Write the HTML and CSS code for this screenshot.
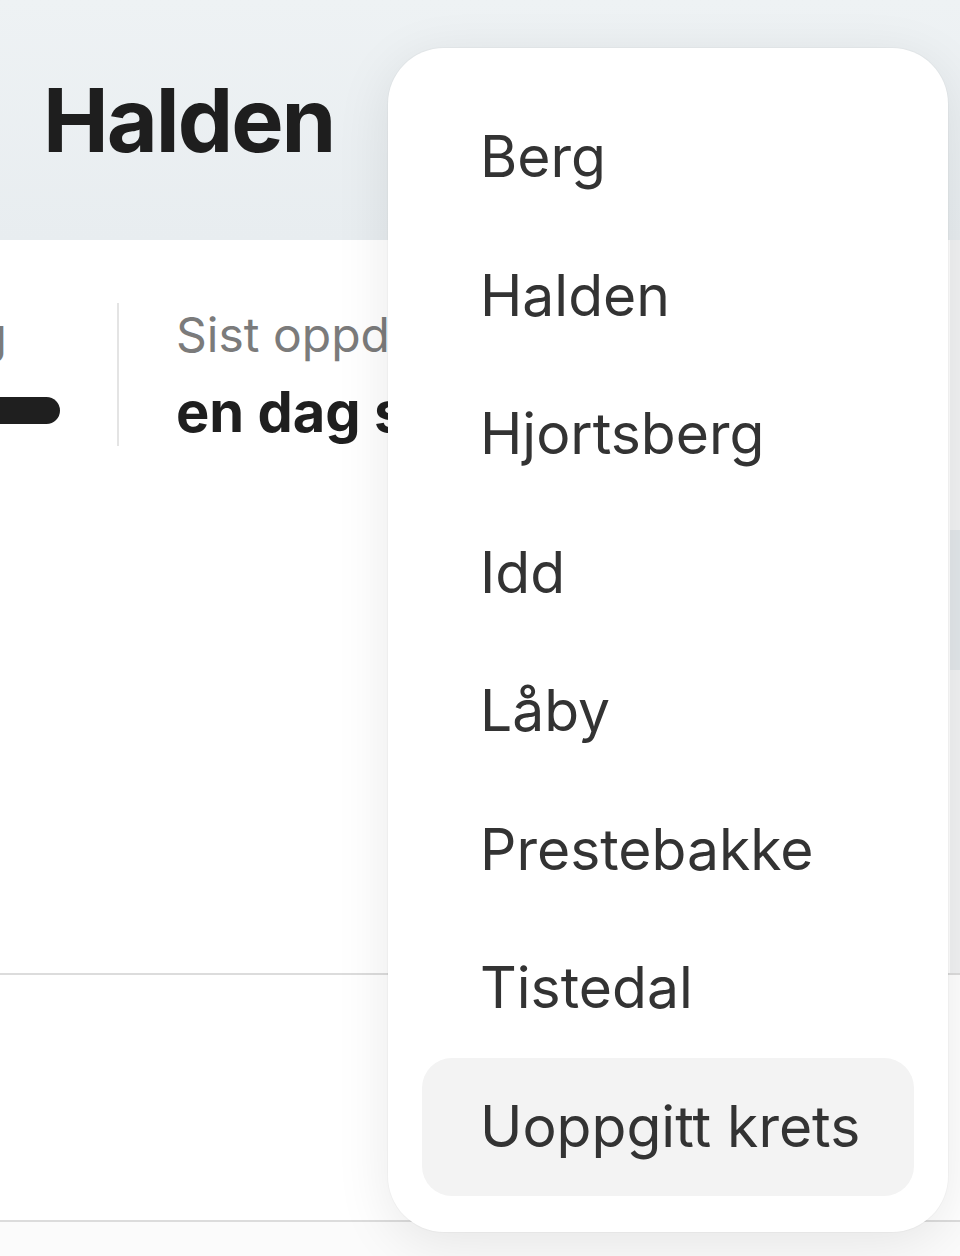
FILE: index.html
```html
<!DOCTYPE html>
<html lang="no">
<head>
<meta charset="utf-8">
<title>Halden</title>
<link rel="stylesheet" href="styles.css">
</head>
<body>
  <header class="hero">
    <h1 class="hero-title">Halden</h1>
  </header>

  <div class="content">
    <main class="main">
      <div class="stats">
        <div class="stat stat-first">
          <span class="stat-label">Telling</span>
          <div class="stat-bar"></div>
        </div>
        <div class="stat-divider"></div>
        <div class="stat">
          <span class="stat-label">Sist oppdatert</span>
          <span class="stat-value">en dag siden</span>
        </div>
      </div>
    </main>
    <aside class="side">
      <div class="side-block"></div>
    </aside>
  </div>

  <div class="rule"></div>
  <section class="section"></section>
  <div class="rule"></div>
  <div class="footer"></div>

  <ul class="menu">
    <li class="menu-item">Berg</li>
    <li class="menu-item">Halden</li>
    <li class="menu-item">Hjortsberg</li>
    <li class="menu-item">Idd</li>
    <li class="menu-item">Låby</li>
    <li class="menu-item">Prestebakke</li>
    <li class="menu-item">Tistedal</li>
    <li class="menu-item menu-item-active">Uoppgitt krets</li>
  </ul>
</body>
</html>
```

FILE: styles.css
```css
* {
  box-sizing: border-box;
}

html, body {
  margin: 0;
  padding: 0;
}

body {
  width: 960px;
  height: 1256px;
  overflow: hidden;
  position: relative;
  background: #ffffff;
  font-family: Inter, "Noto Sans", "Liberation Sans", sans-serif;
  color: #222;
}

/* Header band */
.hero {
  height: 240px;
  padding: 76px 0 0 43px;
  background: linear-gradient(180deg, #eef2f4 0%, #e8edf0 100%);
}

.hero-title {
  margin: 0;
  font-size: 88px;
  line-height: 88px;
  font-weight: 700;
  letter-spacing: -2px;
  color: #1e1e1e;
}

/* Content row */
.content {
  display: flex;
  height: 733px;
}

.main {
  flex: 1;
  padding-top: 63px;
  overflow: hidden;
}

.stats {
  display: flex;
  gap: 57px;
  align-items: stretch;
}

.stat {
  display: flex;
  flex-direction: column;
  padding-top: 3px;
  white-space: nowrap;
}

.stat-first {
  width: 201px;
  margin-left: -141px;
  flex: none;
}

.stat-label {
  font-size: 48px;
  line-height: 58px;
  color: #7b7b7b;
}

.stat-value {
  margin-top: 14px;
  font-size: 56px;
  line-height: 68px;
  font-weight: 700;
  color: #1f1f1f;
}

.stat-bar {
  margin-top: 33px;
  height: 27px;
  border-radius: 14px;
  background: #1f1f1f;
}

.stat-divider {
  width: 2px;
  flex: none;
  background: #e4e4e4;
}

.side {
  width: 10px;
  flex: none;
  background: #f1f2f3;
  padding-top: 290px;
}

.side-block {
  height: 140px;
  background: #e2e7ea;
}

.rule {
  height: 2px;
  background: #dcdcdc;
}

.section {
  height: 245px;
  background: #ffffff;
}

.footer {
  height: 40px;
  background: #fbfbfb;
}

/* Dropdown menu overlay */
.menu {
  position: absolute;
  left: 388px;
  top: 48px;
  width: 560px;
  margin: 0;
  padding: 40px 34px 36px;
  list-style: none;
  background: #ffffff;
  border-radius: 56px;
  box-shadow: 0 12px 56px rgba(0, 0, 0, 0.09), 0 0 0 1px rgba(0, 0, 0, 0.025);
}

.menu-item {
  height: 138.5px;
  line-height: 138.5px;
  padding-left: 58px;
  font-size: 57px;
  color: #333333;
  border-radius: 30px;
  white-space: nowrap;
}

.menu-item-active {
  background: #f3f3f3;
}
```
